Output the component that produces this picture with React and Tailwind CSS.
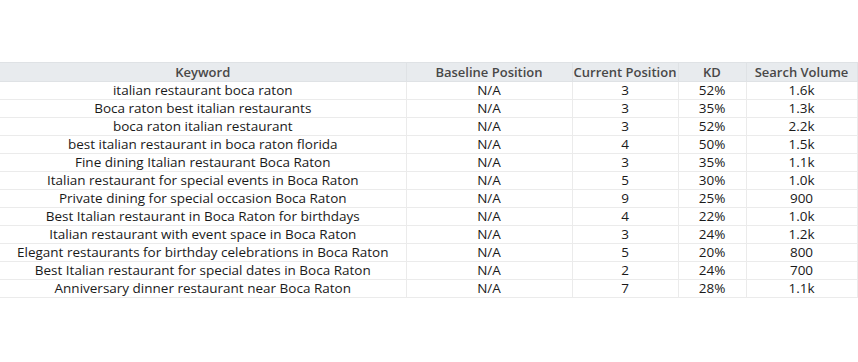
import React from 'react';

const rows = [
  ['italian restaurant boca raton', 'N/A', '3', '52%', '1.6k'],
  ['Boca raton best italian restaurants', 'N/A', '3', '35%', '1.3k'],
  ['boca raton italian restaurant', 'N/A', '3', '52%', '2.2k'],
  ['best italian restaurant in boca raton florida', 'N/A', '4', '50%', '1.5k'],
  ['Fine dining Italian restaurant Boca Raton', 'N/A', '3', '35%', '1.1k'],
  ['Italian restaurant for special events in Boca Raton', 'N/A', '5', '30%', '1.0k'],
  ['Private dining for special occasion Boca Raton', 'N/A', '9', '25%', '900'],
  ['Best Italian restaurant in Boca Raton for birthdays', 'N/A', '4', '22%', '1.0k'],
  ['Italian restaurant with event space in Boca Raton', 'N/A', '3', '24%', '1.2k'],
  ['Elegant restaurants for birthday celebrations in Boca Raton', 'N/A', '5', '20%', '800'],
  ['Best Italian restaurant for special dates in Boca Raton', 'N/A', '2', '24%', '700'],
  ['Anniversary dinner restaurant near Boca Raton', 'N/A', '7', '28%', '1.1k'],
];

const headers = ['Keyword', 'Baseline Position', 'Current Position', 'KD', 'Search Volume'];
const widths = ['w-[406px]', 'w-[166px]', 'w-[106px]', 'w-[68px]', 'w-[111px]'];

export default function App() {
  return (
    <div className="w-[858px] h-[362px] bg-white pt-[62px]" style={{ fontFamily: '"Open Sans", sans-serif' }}>
      <table className="border-collapse table-fixed w-[857px] text-[13.5px]">
        <thead>
          <tr className="h-[19px] bg-[#e8ebee]">
            {headers.map((h, i) => (
              <th
                key={h}
                className={`${widths[i]} border border-[#dfe2e5] border-l-0 p-0 leading-none whitespace-nowrap text-[13px] font-semibold text-[#484848] text-center`}
              >
                {h}
              </th>
            ))}
          </tr>
        </thead>
        <tbody>
          {rows.map((r) => (
            <tr key={r[0]} className="h-[18px]">
              {r.map((c, i) => (
                <td
                  key={i}
                  className="border border-[#ebebeb] border-l-0 p-0 leading-none whitespace-nowrap text-center text-[#1a1a1a]"
                >
                  {c}
                </td>
              ))}
            </tr>
          ))}
        </tbody>
      </table>
    </div>
  );
}
